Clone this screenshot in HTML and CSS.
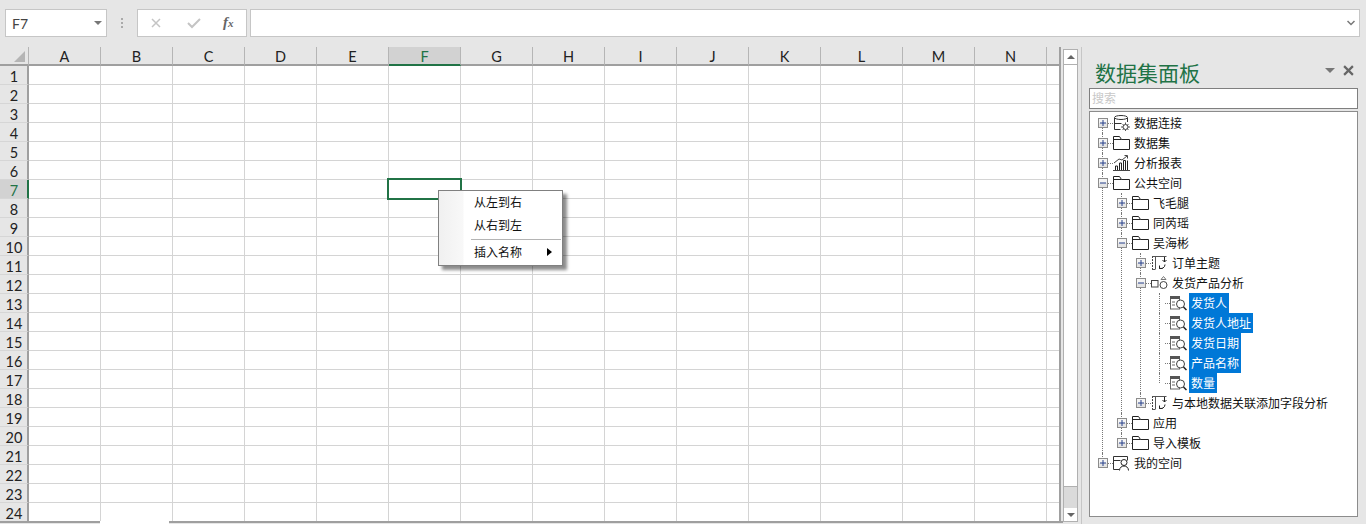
FILE: index.html
```html
<!DOCTYPE html>
<html lang="zh-CN">
<head>
<meta charset="utf-8">
<title>数据集面板</title>
<link rel="stylesheet" href="styles.css">
</head>
<body>
<svg class="defs" width="0" height="0" aria-hidden="true">
  <defs>
    <symbol id="plus" viewBox="0 0 10 10"><rect x=".5" y=".5" width="9" height="9" fill="#e4e4e4" stroke="#8c8c8c"/><rect x="1" y="1" width="8" height="4" fill="#f4f4f4"/><path d="M2 5h6M5 2v6" stroke="#27408b" fill="none"/></symbol>
    <symbol id="minus" viewBox="0 0 10 10"><rect x=".5" y=".5" width="9" height="9" fill="#e4e4e4" stroke="#8c8c8c"/><rect x="1" y="1" width="8" height="4" fill="#f4f4f4"/><path d="M2 5h6" stroke="#27408b" fill="none"/></symbol>
    <symbol id="folder" viewBox="0 0 17 16"><path d="M.5 14.500V1.500h6l2 3h8v10zM.5 4.500h8" fill="none" stroke="#222"/></symbol>
    <symbol id="db" viewBox="0 0 17 16"><ellipse cx="8" cy="2.500" rx="6.500" ry="2" fill="none" stroke="#333"/><path d="M1.500 3v11.500h6M14.500 3v4M1.500 8.500h7" fill="none" stroke="#333"/><circle cx="12.500" cy="12" r="2.500" fill="none" stroke="#444"/><path d="M12.500 7.500v2M12.500 14.500v1.500M8 12h2M15 12h2M9.500 9l1.500 1.500M15.500 9L14 10.500M9.500 15l1.500-1.500M15.500 15L14 13.500" stroke="#555"/></symbol>
    <symbol id="chart" viewBox="0 0 17 16"><path d="M0 15.500h17" stroke="#444"/><path d="M2.500 15v-4h2v4M6.500 15V8h2v7M10.500 15V5.500h2V15" fill="none" stroke="#222"/><path d="M14.500 15V5.500" stroke="#222"/><path d="M1 8l5-4 3 1 5-4M11.500.500h3v3" fill="none" stroke="#444"/></symbol>
    <symbol id="subject" viewBox="0 0 17 16"><path d="M1.500 1v14" stroke="#444" stroke-dasharray="2 1"/><path d="M1 1.500h14.500M1 14.500h3M4.500 1.500v13" fill="none" stroke="#555"/><path d="M13.500 2v5M11.500 5l2 2 2-2" fill="none" stroke="#222"/><path d="M14 9.500a4 4 0 0 1-6 3.500M8.500 10.500V13.500h3" fill="none" stroke="#222"/></symbol>
    <symbol id="analysis" viewBox="0 0 17 16"><rect x=".5" y="5.500" width="6.500" height="6.500" fill="none" stroke="#444"/><circle cx="12.500" cy="10" r="3.500" fill="none" stroke="#444"/><path d="M10 4.500l2.500-3 2.500 3z" fill="none" stroke="#777"/></symbol>
    <symbol id="field" viewBox="0 0 17 16"><rect x=".5" y="1.500" width="9" height="12.500" fill="#fff" stroke="#666"/><rect x="0" y="1" width="10" height="3" fill="#555"/><path d="M2 7h3M2 10h3" stroke="#666"/><circle cx="10.500" cy="9" r="4" fill="#fff" stroke="#444"/><path d="M13.500 12l3 3" stroke="#222" stroke-width="1.500"/></symbol>
    <symbol id="myspace" viewBox="0 0 17 16"><path d="M6 14.500H.5V1.500h14v4M.5 5.500h7" fill="none" stroke="#333"/><circle cx="11" cy="7.500" r="3" fill="#fff" stroke="#222"/><path d="M6.500 15.500c0-6 9-6 9 0" fill="none" stroke="#222"/></symbol>
  </defs>
</svg>

<div class="app">
  <header class="formula-bar">
    <div class="name-box"><span>F7</span><i class="tri"></i></div>
    <div class="grip"><b></b><b></b><b></b></div>
    <div class="fx-box">
      <svg class="fx-icon" viewBox="0 0 12 12"><path d="M2 2l8 8M10 2l-8 8" stroke="#c4c4c4" stroke-width="1.500" fill="none"/></svg>
      <svg class="fx-icon" viewBox="0 0 14 12"><path d="M1 6l4 4 8-8" stroke="#c4c4c4" stroke-width="2" fill="none"/></svg>
      <span class="fx-text">f<small>x</small></span>
    </div>
    <div class="formula-input"><svg class="chev" viewBox="0 0 8 6"><path d="M.5 1l3.500 3.500L7.500 1" stroke="#777" stroke-width="1.500" fill="none"/></svg></div>
  </header>

  <main class="workspace">
    <section class="sheet">
      <div class="grid">
        <div class="corner"><i></i></div>
        <div class="ch">A</div><div class="ch">B</div><div class="ch">C</div><div class="ch">D</div><div class="ch">E</div>
        <div class="ch active">F</div>
        <div class="ch">G</div><div class="ch">H</div><div class="ch">I</div><div class="ch">J</div><div class="ch">K</div>
        <div class="ch">L</div><div class="ch">M</div><div class="ch">N</div><div class="ch tail"></div>

        <div class="rows">
          <div class="rh">1</div><div class="rh">2</div><div class="rh">3</div><div class="rh">4</div><div class="rh">5</div><div class="rh">6</div>
          <div class="rh active">7</div>
          <div class="rh">8</div><div class="rh">9</div><div class="rh">10</div><div class="rh">11</div><div class="rh">12</div>
          <div class="rh">13</div><div class="rh">14</div><div class="rh">15</div><div class="rh">16</div><div class="rh">17</div><div class="rh">18</div>
          <div class="rh">19</div><div class="rh">20</div><div class="rh">21</div><div class="rh">22</div><div class="rh">23</div><div class="rh">24</div>
        </div>
        <div class="col"></div><div class="col"></div><div class="col"></div><div class="col"></div><div class="col"></div><div class="col"></div><div class="col"></div>
        <div class="col"></div><div class="col"></div><div class="col"></div><div class="col"></div><div class="col"></div><div class="col"></div><div class="col"></div><div class="col tail"></div>
      </div>
      <div class="tabs"><span class="tab-line short"></span><span class="tab"></span><span class="tab-line"></span></div>
      <div class="selection"></div>
      <ul class="menu">
        <li>从左到右</li>
        <li>从右到左</li>
        <li class="sep"></li>
        <li class="sub">插入名称<i></i></li>
      </ul>
    </section>

    <div class="vscroll">
      <div class="sb-btn up"><i></i></div>
      <div class="sb-thumb"></div>
      <div class="sb-track"></div>
      <div class="sb-btn down"><i></i></div>
    </div>

    <aside class="panel">
      <div class="panel-head">
        <h1>数据集面板</h1>
        <i class="panel-tri"></i>
        <svg class="panel-close" viewBox="0 0 10 10"><path d="M1 1l8 8M9 1l-8 8" stroke="#666" stroke-width="2" fill="none"/></svg>
      </div>
      <div class="search">搜索</div>
      <div class="tree-box">
        <ul class="tree">
          <li><div class="node"><svg class="exp"><use href="#plus"/></svg><i class="dash"></i><svg class="ico"><use href="#db"/></svg><span>数据连接</span></div></li>
          <li><div class="node"><svg class="exp"><use href="#plus"/></svg><i class="dash"></i><svg class="ico"><use href="#folder"/></svg><span>数据集</span></div></li>
          <li><div class="node"><svg class="exp"><use href="#plus"/></svg><i class="dash"></i><svg class="ico"><use href="#chart"/></svg><span>分析报表</span></div></li>
          <li><div class="node"><svg class="exp"><use href="#minus"/></svg><i class="dash"></i><svg class="ico"><use href="#folder"/></svg><span>公共空间</span></div>
            <ul>
              <li><div class="node"><svg class="exp"><use href="#plus"/></svg><i class="dash"></i><svg class="ico"><use href="#folder"/></svg><span>飞毛腿</span></div></li>
              <li><div class="node"><svg class="exp"><use href="#plus"/></svg><i class="dash"></i><svg class="ico"><use href="#folder"/></svg><span>同芮瑶</span></div></li>
              <li><div class="node"><svg class="exp"><use href="#minus"/></svg><i class="dash"></i><svg class="ico"><use href="#folder"/></svg><span>吴海彬</span></div>
                <ul>
                  <li><div class="node"><svg class="exp"><use href="#plus"/></svg><i class="dash"></i><svg class="ico"><use href="#subject"/></svg><span>订单主题</span></div></li>
                  <li><div class="node"><svg class="exp"><use href="#minus"/></svg><i class="dash"></i><svg class="ico"><use href="#analysis"/></svg><span>发货产品分析</span></div>
                    <ul>
                      <li><div class="node leaf"><i class="gap"></i><i class="dash"></i><svg class="ico"><use href="#field"/></svg><span class="picked">发货人</span></div></li>
                      <li><div class="node leaf"><i class="gap"></i><i class="dash"></i><svg class="ico"><use href="#field"/></svg><span class="picked">发货人地址</span></div></li>
                      <li><div class="node leaf"><i class="gap"></i><i class="dash"></i><svg class="ico"><use href="#field"/></svg><span class="picked">发货日期</span></div></li>
                      <li><div class="node leaf"><i class="gap"></i><i class="dash"></i><svg class="ico"><use href="#field"/></svg><span class="picked">产品名称</span></div></li>
                      <li><div class="node leaf"><i class="gap"></i><i class="dash"></i><svg class="ico"><use href="#field"/></svg><span class="picked">数量</span></div></li>
                    </ul>
                  </li>
                  <li><div class="node"><svg class="exp"><use href="#plus"/></svg><i class="dash"></i><svg class="ico"><use href="#subject"/></svg><span>与本地数据关联添加字段分析</span></div></li>
                </ul>
              </li>
              <li><div class="node"><svg class="exp"><use href="#plus"/></svg><i class="dash"></i><svg class="ico"><use href="#folder"/></svg><span>应用</span></div></li>
              <li><div class="node"><svg class="exp"><use href="#plus"/></svg><i class="dash"></i><svg class="ico"><use href="#folder"/></svg><span>导入模板</span></div></li>
            </ul>
          </li>
          <li><div class="node"><svg class="exp"><use href="#plus"/></svg><i class="dash"></i><svg class="ico"><use href="#myspace"/></svg><span>我的空间</span></div></li>
        </ul>
      </div>
    </aside>
  </main>
</div>
</body>
</html>
```

FILE: styles.css
```css
* { box-sizing: border-box; }
html, body { margin: 0; padding: 0; }
body {
  width: 1366px;
  height: 524px;
  overflow: hidden;
  background: #e6e6e6;
  font-family: "Noto Sans CJK SC", "Liberation Sans", sans-serif;
  font-size: 12px;
  color: #000;
}
i { display: block; font-style: normal; }
.defs { position: absolute; }

.app { display: flex; flex-direction: column; height: 524px; }

/* formula bar */
.formula-bar {
  display: flex;
  align-items: stretch;
  height: 47px;
  padding: 9px 6px 10px 5px;
}
.name-box {
  width: 102px;
  display: flex;
  align-items: center;
  justify-content: space-between;
  padding: 0 4px 0 6px;
  background: #fff;
  border: 1px solid #c6c6c6;
  font: 14px "Lato", sans-serif;
  color: #444;
}
.tri {
  width: 0; height: 0;
  border-left: 4px solid transparent;
  border-right: 4px solid transparent;
  border-top: 4px solid #777;
}
.grip {
  width: 30px;
  display: flex;
  flex-direction: column;
  align-items: center;
  justify-content: center;
  gap: 2px;
}
.grip b { width: 2px; height: 2px; background: #aaa; }
.fx-box {
  width: 110px;
  display: flex;
  align-items: center;
  padding-left: 12px;
  background: #fff;
  border: 1px solid #c6c6c6;
}
.fx-icon { width: 12px; height: 12px; margin-right: 25px; flex: none; }
.fx-icon + .fx-icon { width: 14px; margin-right: 22px; }
.fx-text { font: italic bold 15px "Liberation Serif", serif; color: #666; margin-top: -2px; }
.fx-text small { font-size: 11px; }
.formula-input {
  flex: 1;
  margin-left: 3px;
  display: flex;
  align-items: center;
  justify-content: flex-end;
  padding-right: 4px;
  background: #fff;
  border: 1px solid #c6c6c6;
}
.chev { width: 8px; height: 6px; }

/* workspace */
.workspace { flex: 1; display: flex; min-height: 0; }
.sheet { position: relative; width: 1063px; flex: none; }

.grid {
  display: grid;
  width: 1061px;
  grid-template-columns: 29px repeat(11, 72px) 82px 72px 72px 12px;
  grid-template-rows: 19px 456px;
  border-right: 2px solid #a0a0a0;
  font-family: "Lato", "Liberation Sans", sans-serif;
}
.corner {
  position: relative;
  border-right: 1px solid #b5b5b5;
  border-bottom: 2px solid #9f9f9f;
}
.corner i {
  position: absolute;
  left: 14px;
  top: 4px;
  width: 0; height: 0;
  border-left: 11px solid transparent;
  border-bottom: 11px solid #b5b5b5;
}
.ch {
  display: flex;
  align-items: center;
  justify-content: center;
  border-right: 1px solid #b5b5b5;
  border-bottom: 2px solid #9f9f9f;
  font-size: 14.5px;
  color: #222;
  padding-top: 2px;
}
.ch.tail { border-right: 0; }
.ch.active {
  background: #d2d2d2;
  border-bottom-color: #217346;
  color: #217346;
}
.rows { display: grid; grid-template-rows: repeat(24, 19px); }
.rh {
  display: flex;
  align-items: center;
  justify-content: center;
  border-right: 2px solid #9f9f9f;
  border-bottom: 1px solid #d6d6d6;
  font-size: 14.5px;
  color: #222;
  padding: 2px 0 0 1px;
}
.rh.active {
  background: #d2d2d2;
  border-right-color: #217346;
  color: #217346;
}
.col {
  background: #fff repeating-linear-gradient(to bottom, transparent 0 18px, #d4d4d4 18px 19px);
  border-right: 1px solid #d4d4d4;
}
.col.tail { border-right: 0; }

.tabs { display: flex; height: 3px; margin-top: -1px; position: relative; }
.tab-line { flex: 1; height: 2px; background: #9f9f9f; }
.tab-line.short { flex: none; width: 100px; }
.tab { width: 69px; background: #fff; }

.selection {
  position: absolute;
  left: 387px;
  top: 131px;
  width: 75px;
  height: 22px;
  border: 2px solid #217346;
}

.menu {
  position: absolute;
  left: 438px;
  top: 143px;
  width: 125px;
  height: 76px;
  margin: 0;
  padding: 0 0 0 35px;
  list-style: none;
  background: linear-gradient(to right, #f0f0f0 0, #f8f8f8 24px, #fff 25px);
  border: 1px solid #808080;
  box-shadow: 4px 4px 3px rgba(0, 0, 0, .45);
  line-height: 23px;
  color: #111;
}
.menu li:first-child { margin-top: -1px; }
.menu .sep { height: 1px; margin: 3px 1px 0 -3px; background: #b4b4b4; }
.menu .sub { display: flex; align-items: center; }
.menu .sub i {
  width: 0; height: 0;
  margin-left: 25px;
  border-left: 5px solid #000;
  border-top: 4px solid transparent;
  border-bottom: 4px solid transparent;
}

/* scrollbar */
.vscroll {
  width: 15px;
  flex: none;
  margin-top: 2px;
  height: 473px;
  display: flex;
  flex-direction: column;
  background: #dadada;
  border: 1px solid #b0b0b0;
}
.sb-btn { height: 14px; flex: none; background: #fff; display: flex; align-items: center; justify-content: center; }
.sb-btn.down { border-top: 1px solid #dadada; }
.sb-btn i { width: 0; height: 0; border-left: 4px solid transparent; border-right: 4px solid transparent; }
.sb-btn.up i { border-bottom: 4px solid #666; }
.sb-btn.down i { border-top: 4px solid #666; }
.sb-thumb { height: 423px; background: #fff; border-top: 1px solid #b0b0b0; border-bottom: 1px solid #b0b0b0; flex: none; }
.sb-track { flex: 1; }

/* panel */
.panel {
  margin-left: 3px;
  flex: 1;
  height: 477px;
  border-left: 1px solid #c6c6c6;
  padding: 0 8px 0 7px;
  display: flex;
  flex-direction: column;
}
.panel-head {
  height: 41px;
  padding: 10px 4px 0 6px;
  display: flex;
  align-items: center;
}
.panel-head h1 {
  margin: 0 auto 0 0;
  font-size: 21px;
  font-weight: 400;
  color: #217346;
  line-height: 29px;
}
.panel-tri {
  width: 0; height: 0;
  margin: -5px 8px 0 0;
  border-left: 5px solid transparent;
  border-right: 5px solid transparent;
  border-top: 5px solid #777;
}
.panel-close { width: 11px; height: 11px; margin: -5px 0 0 0; }
.search {
  height: 21px;
  padding-left: 2px;
  background: #fff;
  border: 1px solid #7f7f7f;
  color: #c8c8c8;
  line-height: 18px;
}
.tree-box {
  margin-top: 2px;
  height: 406px;
  padding-top: 1px;
  background: #fff;
  border: 1px solid #8c8c8c;
}
.tree, .tree ul { list-style: none; margin: 0; padding: 0; }
.tree { padding-left: 8px; }
.tree ul { padding-left: 19px; }
.tree li { position: relative; }
.tree li::before {
  content: "";
  position: absolute;
  left: 4px;
  top: 0;
  bottom: 0;
  border-left: 1px dotted #777;
}
.tree > li:first-child::before { top: 10px; }
.tree li:last-child::before { bottom: auto; height: 10px; }
.node {
  position: relative;
  display: flex;
  align-items: center;
  height: 20px;
  white-space: nowrap;
  color: #111;
}
.exp { width: 10px; height: 10px; flex: none; position: relative; }
.gap { width: 10px; flex: none; }
.dash { width: 5px; flex: none; border-top: 1px dotted #777; }
.ico { width: 17px; height: 16px; flex: none; margin-right: 4px; }
.node span { line-height: 20px; }
.leaf .ico { margin-right: 2px; }
.picked { background: #0078d7; color: #fff; padding: 0 2px; }
```
